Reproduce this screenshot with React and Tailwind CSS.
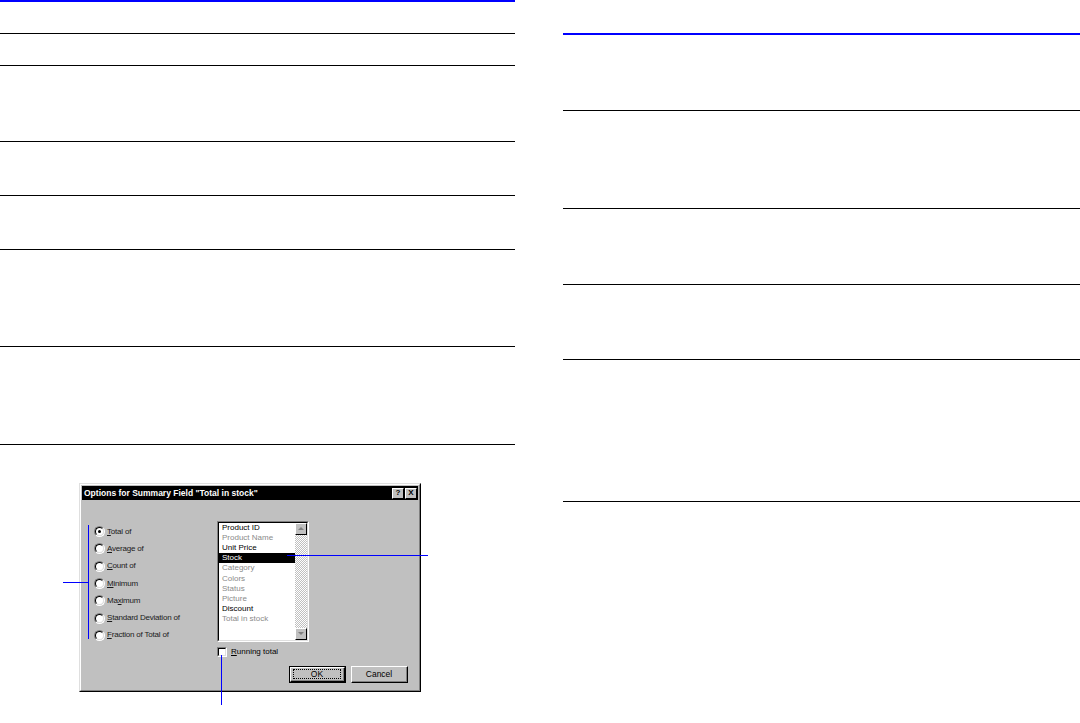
import React from 'react';

const font = "font-['Liberation_Sans',Arial,sans-serif]";

const leftRows = [32, 32, 76, 54, 54, 97, 98];
const rightRows = [76, 98, 76, 75, 142];

const radios = [
    { pre: '', key: 'T', post: 'otal of', checked: true },
    { pre: '', key: 'A', post: 'verage of' },
    { pre: '', key: 'C', post: 'ount of' },
    { pre: '', key: 'M', post: 'inimum' },
    { pre: 'Ma', key: 'x', post: 'imum' },
    { pre: '', key: 'S', post: 'tandard Deviation of' },
    { pre: '', key: 'F', post: 'raction of Total of' },
];

const fields = [
    { name: 'Product ID', on: true },
    { name: 'Product Name' },
    { name: 'Unit Price', on: true },
    { name: 'Stock', on: true, selected: true },
    { name: 'Category' },
    { name: 'Colors' },
    { name: 'Status' },
    { name: 'Picture' },
    { name: 'Discount', on: true },
    { name: 'Total in stock' },
];

const Radio = ({ checked }) => (
    <div className="w-[11px] h-[11px] shrink-0 rounded-full border border-t-[#808080] border-l-[#808080] border-b-white border-r-white">
        <div className="w-full h-full rounded-full border border-t-black border-l-black border-b-[#dfdfdf] border-r-[#dfdfdf] bg-white flex items-center justify-center">
            {checked && <div className="w-[3px] h-[3px] rounded-full bg-black" />}
        </div>
    </div>
);

const Arrow = ({ down }) => (
    <div className="w-[12px] h-[12px] bg-[#c0c0c0] border border-t-white border-l-white border-b-black border-r-black flex items-center justify-center">
        <svg width="6" height="4" viewBox="0 0 6 4">
            <polygon points={down ? '0,0 6,0 3,3' : '3,0 6,3 0,3'} fill="#808080" />
        </svg>
    </div>
);

const Button = ({ children, isDefault }) => (
    <div className={`w-[57px] h-[17px] ${isDefault ? 'border border-black' : ''}`}>
        <div className="w-full h-full bg-[#c0c0c0] border border-t-white border-l-white border-b-black border-r-black">
            <div className="w-full h-full border-b border-r border-b-[#808080] border-r-[#808080] flex items-center justify-center px-[2px] py-px">
                <div className={`w-full h-full flex items-center justify-center text-[8.5px] leading-none text-black ${isDefault ? 'border border-dotted border-black' : ''}`}>
                    {children}
                </div>
            </div>
        </div>
    </div>
);

const Dialog = () => (
    <div className={`w-[342px] h-[209px] bg-[#c0c0c0] border border-t-[#dfdfdf] border-l-[#dfdfdf] border-b-black border-r-black ${font}`}>
        <div className="w-full h-full border border-t-white border-l-white border-b-[#808080] border-r-[#808080] p-px flex flex-col">
            <div className="h-[14px] bg-black flex items-center justify-between pl-[2px] pr-[1px]">
                <span className="text-white font-bold text-[8.5px] leading-none">Options for Summary Field "Total in stock"</span>
                <div className="flex gap-[1px]">
                    <div className="w-[12px] h-[11px] bg-[#c0c0c0] border border-t-white border-l-white border-b-black border-r-black flex items-center justify-center text-[8px] font-bold leading-none text-black">?</div>
                    <div className="w-[12px] h-[11px] bg-[#c0c0c0] border border-t-white border-l-white border-b-black border-r-black flex items-center justify-center text-[8px] font-bold leading-none text-black">X</div>
                </div>
            </div>
            <div className="flex">
                <div className="w-[135px] pl-[12px] pt-[23px] flex flex-col">
                    {radios.map((r) => (
                        <div key={r.post} className="h-[17.3px] flex items-center gap-[2px]">
                            <Radio checked={r.checked} />
                            <span className="text-[8px] leading-none tracking-[-0.2px] text-[#1a1a1a]">
                                {r.pre}<span className="underline">{r.key}</span>{r.post}
                            </span>
                        </div>
                    ))}
                </div>
                <div className="pt-[21px] flex flex-col">
                    <div className="w-[92px] h-[121px] border border-t-[#808080] border-l-[#808080] border-b-white border-r-white">
                        <div className="w-full h-full border border-t-black border-l-black border-b-[#dfdfdf] border-r-[#dfdfdf] bg-white flex">
                            <div className="flex-1 flex flex-col">
                                {fields.map((f) => (
                                    <div
                                        key={f.name}
                                        className={`h-[10.1px] pl-[3px] flex items-center text-[8px] leading-none ${f.selected ? 'bg-black text-white' : f.on ? 'text-black' : 'text-[#8a8a8a]'}`}
                                    >
                                        {f.name}
                                    </div>
                                ))}
                            </div>
                            <div className="w-[12px] flex flex-col bg-[repeating-conic-gradient(#c0c0c0_0_25%,#ffffff_0_50%)] bg-[length:2px_2px]">
                                <Arrow />
                                <div className="flex-1" />
                                <Arrow down />
                            </div>
                        </div>
                    </div>
                    <div className="mt-[4px] h-[12px] flex items-center gap-[4px]">
                        <div className="w-[10px] h-[10px] border border-t-[#808080] border-l-[#808080] border-b-white border-r-white">
                            <div className="w-full h-full border border-t-black border-l-black border-b-[#dfdfdf] border-r-[#dfdfdf] bg-white" />
                        </div>
                        <span className="text-[8px] leading-none text-black">
                            <span className="underline">R</span>unning total
                        </span>
                    </div>
                    <div className="mt-[8px] ml-[72px] flex gap-[5px]">
                        <Button isDefault>OK</Button>
                        <Button>Cancel</Button>
                    </div>
                </div>
            </div>
        </div>
    </div>
);

const App = () => {
    return (
        <div className="w-[1080px] h-[723px] bg-white flex overflow-hidden">
            <div className="w-[515px] flex flex-col">
                <div className="border-t-2 border-[#0000ff]">
                    {leftRows.map((h, i) => (
                        <div key={i} className="border-b border-black" style={{ height: h }} />
                    ))}
                </div>

                {/* figure with callout lines */}
                <div className="relative h-[278px]">
                    <div className="ml-[79px] mt-[38px]">
                        <Dialog />
                    </div>
                    <div className="absolute left-[88px] top-[80px] w-px h-[114px] bg-[#0000ff]" />
                    <div className="absolute left-[63px] top-[137px] w-[25px] h-px bg-[#0000ff]" />
                    <div className="absolute left-[287px] top-[110px] w-[141px] h-px bg-[#0000ff]" />
                    <div className="absolute left-[221px] top-[210px] w-px h-[50px] bg-[#0000ff]" />
                </div>
            </div>

            <div className="ml-[48px] flex-1 mt-[33px]">
                <div className="border-t-2 border-[#0000ff]">
                    {rightRows.map((h, i) => (
                        <div key={i} className="border-b border-black" style={{ height: h }} />
                    ))}
                </div>
            </div>
        </div>
    );
};

export default App;
